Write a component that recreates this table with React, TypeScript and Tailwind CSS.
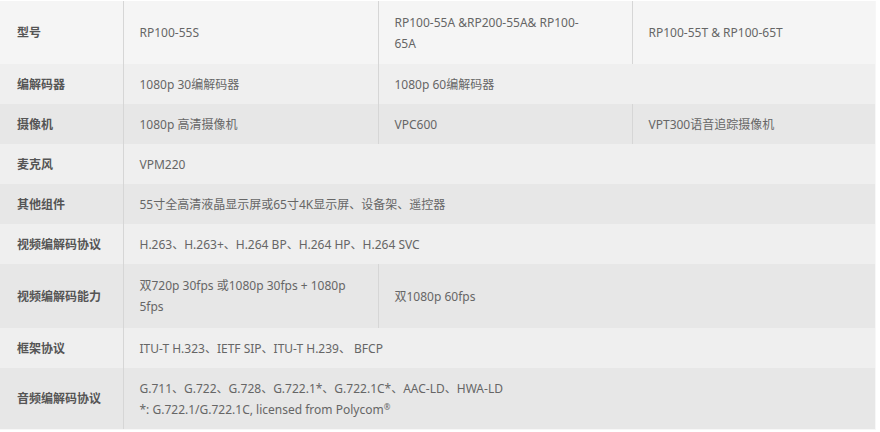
const font = {
  fontFamily: '"Noto Sans", "Noto Sans CJK SC", sans-serif',
};

type Cell = { text: React.ReactNode; span?: number };
type Row = { label: string; cells: Cell[]; h: string; bg: string };

const rows: Row[] = [
  {
    label: "型号",
    h: "h-[63px]",
    bg: "bg-[#f5f5f5]",
    cells: [
      { text: "RP100-55S" },
      {
        text: (
          <>
            RP100-55A &amp;RP200-55A&amp; RP100-
            <br />
            65A
          </>
        ),
      },
      { text: "RP100-55T & RP100-65T" },
    ],
  },
  {
    label: "编解码器",
    h: "h-[40px]",
    bg: "bg-[#efefef]",
    cells: [{ text: "1080p 30编解码器" }, { text: "1080p 60编解码器", span: 2 }],
  },
  {
    label: "摄像机",
    h: "h-[40px]",
    bg: "bg-[#e7e7e7]",
    cells: [
      { text: "1080p 高清摄像机" },
      { text: "VPC600" },
      { text: "VPT300语音追踪摄像机" },
    ],
  },
  {
    label: "麦克风",
    h: "h-[40px]",
    bg: "bg-[#efefef]",
    cells: [{ text: "VPM220", span: 3 }],
  },
  {
    label: "其他组件",
    h: "h-[40px]",
    bg: "bg-[#e7e7e7]",
    cells: [{ text: "55寸全高清液晶显示屏或65寸4K显示屏、设备架、遥控器", span: 3 }],
  },
  {
    label: "视频编解码协议",
    h: "h-[40px]",
    bg: "bg-[#efefef]",
    cells: [{ text: "H.263、H.263+、H.264 BP、H.264 HP、H.264 SVC", span: 3 }],
  },
  {
    label: "视频编解码能力",
    h: "h-[64px]",
    bg: "bg-[#e7e7e7]",
    cells: [
      {
        text: (
          <>
            双720p 30fps 或1080p 30fps + 1080p
            <br />
            5fps
          </>
        ),
      },
      { text: "双1080p 60fps", span: 2 },
    ],
  },
  {
    label: "框架协议",
    h: "h-[40px]",
    bg: "bg-[#efefef]",
    cells: [{ text: "ITU-T H.323、IETF SIP、ITU-T H.239、 BFCP", span: 3 }],
  },
  {
    label: "音频编解码协议",
    h: "h-[61px]",
    bg: "bg-[#e7e7e7]",
    cells: [
      {
        text: (
          <>
            G.711、G.722、G.728、G.722.1*、G.722.1C*、AAC-LD、HWA-LD
            <br />
            *: G.722.1/G.722.1C, licensed from Polycom
            <sup className="text-[8px]">®</sup>
          </>
        ),
        span: 3,
      },
    ],
  },
];

export default function App() {
  return (
    <div className="h-[432px] w-[880px] bg-white pt-[1px]" style={font}>
      <div className="w-[876px] border-r border-b border-[#f7f7f7]">
        <table className="w-full table-fixed border-collapse text-[12px] leading-[21px]">
          <colgroup>
            <col className="w-[123px]" />
            <col className="w-[255px]" />
            <col className="w-[254px]" />
            <col />
          </colgroup>
          <tbody>
            {rows.map((row) => (
              <tr key={row.label} className={row.bg}>
                <td
                  className={`${row.h} pl-[17px] align-middle font-bold text-[#555]`}
                >
                  {row.label}
                </td>
                {row.cells.map((cell, i) => (
                  <td
                    key={i}
                    colSpan={cell.span ?? 1}
                    className="border-l border-[#d6d6d6] pl-[16px] pr-2 align-middle text-[#666]"
                  >
                    {cell.text}
                  </td>
                ))}
              </tr>
            ))}
          </tbody>
        </table>
      </div>
    </div>
  );
}
